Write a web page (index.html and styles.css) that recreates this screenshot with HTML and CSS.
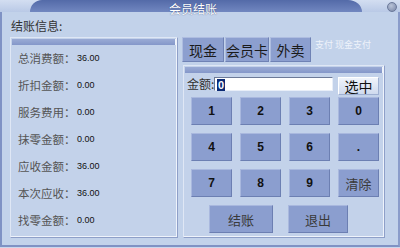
FILE: index.html
```html
<!DOCTYPE html>
<html>
	<head>
		<meta charset="utf-8">
		<title>会员结账</title>
		<link rel="stylesheet" href="styles.css">
	</head>
	<body>
		<div class="window">
			<div class="titlebar">
				<div class="band"><span class="title">会员结账</span></div>
				<span class="close"></span>
			</div>
			<div class="content">
				<div class="info">
					<div class="caption">结账信息:</div>
					<div class="panel info-panel">
						<div class="panel-head"></div>
						<ul class="rows">
							<li><span class="label">总消费额：</span><span class="value">36.00</span></li>
							<li><span class="label">折扣金额：</span><span class="value">0.00</span></li>
							<li><span class="label">服务费用：</span><span class="value">0.00</span></li>
							<li><span class="label">抹零金额：</span><span class="value">0.00</span></li>
							<li><span class="label">应收金额：</span><span class="value">36.00</span></li>
							<li><span class="label">本次应收：</span><span class="value">36.00</span></li>
							<li><span class="label">找零金额：</span><span class="value">0.00</span></li>
						</ul>
					</div>
				</div>
				<div class="pay">
					<div class="tabs">
						<button class="tab">现金</button>
						<button class="tab">会员卡</button>
						<button class="tab">外卖</button>
						<span class="pay-note">支付 现金支付</span>
					</div>
					<div class="panel pay-panel">
						<div class="panel-head"></div>
						<div class="amount-row">
							<span class="amount-label">金额:</span>
							<div class="amount-input"><span class="sel">0</span></div>
							<button class="pick">选中</button>
						</div>
						<div class="keypad">
							<button class="key">1</button>
							<button class="key">2</button>
							<button class="key">3</button>
							<button class="key">0</button>
							<button class="key">4</button>
							<button class="key">5</button>
							<button class="key">6</button>
							<button class="key">.</button>
							<button class="key">7</button>
							<button class="key">8</button>
							<button class="key">9</button>
							<button class="key cn">清除</button>
						</div>
						<div class="actions">
							<button class="key cn act-ok">结账</button>
							<button class="key cn act-exit">退出</button>
						</div>
					</div>
				</div>
			</div>
		</div>
	</body>
</html>
```

FILE: styles.css
```css
* {
	box-sizing: border-box;
}
body {
	margin: 0;
	width: 400px;
	height: 248px;
	overflow: hidden;
	background: #cad7ec;
	font-family: "Noto Sans CJK SC", "Liberation Sans", sans-serif;
	font-size: 12px;
	color: #333;
	white-space: nowrap;
}
.window {
	width: 400px;
	height: 247px;
	background: #c2d2ea;
	border-left: 2px solid #7f92c4;
	border-right: 2px solid #8a9cca;
	border-bottom: 2px solid #7f92c4;
}
.titlebar {
	height: 12px;
	display: flex;
	align-items: stretch;
	background: linear-gradient(#d3def1, #b9c9e6);
	margin: 0 -2px;
	position: relative;
}
.band {
	flex: 1;
	margin: 0 38px 0 30px;
	background: linear-gradient(#536aa8, #7187c0);
	border-top-left-radius: 12px 12px;
	border-top-right-radius: 14px 12px;
	text-align: center;
}
.title {
	color: #fff;
	font-size: 12px;
	line-height: 12px;
	position: relative;
	left: -3px;
	text-shadow: 0 0 1px #2b3f73;
}
.close {
	position: absolute;
	right: 3px;
	top: 2px;
	width: 10px;
	height: 10px;
	border-radius: 50%;
	background: radial-gradient(circle at 40% 35%, #b8c3d8, #7785a6);
	border: 1px solid #6a7899;
}
.content {
	display: flex;
	padding-left: 8px;
}
.info {
	width: 168px;
}
.caption {
	height: 25px;
	padding: 2px 0 0 1px;
	line-height: 23px;
	font-size: 12px;
	color: #333;
}
.panel {
	border: 1px solid #8e9fc8;
	border-top-color: #dfe7f5;
	border-left-color: #dfe7f5;
	background: #c3d2ea;
	box-shadow: inset -1px -1px 0 #eef3fb;
	padding: 1px;
}
.panel-head {
	height: 6px;
	background: linear-gradient(#9aabd5, #8497c9);
	border-right: 1px solid #eef3fb;
}
.info-panel {
	height: 201px;
}
.rows {
	list-style: none;
	margin: -1px 0 0 0;
	padding: 0;
}
.rows li {
	height: 27px;
	display: flex;
	align-items: center;
	padding-left: 6px;
}
.label {
	width: 59px;
	flex-shrink: 0;
	font-size: 11.5px;
	color: #555;
}
.value {
	font-family: "Liberation Sans", sans-serif;
	font-size: 9px;
	color: #111;
}
.pay {
	width: 203px;
	margin-left: 4px;
	padding-top: 25px;
}
.tabs {
	display: flex;
	height: 25px;
	gap: 1px;
}
.tab {
	height: 25px;
	padding: 0;
	font-family: "Noto Sans CJK SC", sans-serif;
	font-size: 14px;
	line-height: 22px;
	color: #1a1a1a;
	background: #8c9fcf;
	border: 1px solid #6f82b4;
	border-top-color: #aebde0;
	border-left-color: #aebde0;
	white-space: nowrap;
	flex-shrink: 0;
}
.tab:nth-child(1) {
	width: 42px;
}
.tab:nth-child(2) {
	width: 44px;
}
.tab:nth-child(3) {
	width: 41px;
}
.pay-note {
	margin-left: 3px;
	margin-top: 1px;
	font-size: 9px;
	line-height: 14px;
	color: #eef2fa;
}
.pay-panel {
	margin: 3px 0 0 1px;
	height: 173px;
}
.amount-row {
	display: flex;
	align-items: flex-start;
	padding: 4px 0 0 2px;
	height: 23px;
}
.amount-label {
	width: 27px;
	flex-shrink: 0;
	line-height: 14px;
	font-size: 12px;
	color: #333;
}
.amount-input {
	width: 119px;
	height: 14px;
	background: #fff;
	border: 1px solid #6c7a98;
	border-right-color: #e8eef8;
	border-bottom-color: #e8eef8;
	padding-left: 2px;
	line-height: 12px;
}
.sel {
	display: inline-block;
	background: #0b2a74;
	color: #fff;
	font-family: "Liberation Sans", sans-serif;
	font-weight: bold;
	font-size: 11px;
	line-height: 12px;
	padding: 0 1px;
}
.pick {
	margin-left: 5px;
	width: 41px;
	height: 18px;
	padding: 0;
	font-family: "Noto Sans CJK SC", sans-serif;
	font-size: 14px;
	line-height: 16px;
	color: #111;
	background: linear-gradient(#f0f4fb, #cfdaee);
	border: 1px solid #9fb0d2;
	border-top-color: #fff;
	border-left-color: #fff;
}
.keypad {
	display: grid;
	grid-template-columns: repeat(4, 41px);
	grid-auto-rows: 28px;
	gap: 8px;
	margin-top: 1px;
	padding-left: 6px;
}
.key {
	padding: 0;
	font-family: "Liberation Sans", sans-serif;
	font-weight: bold;
	font-size: 12px;
	color: #111;
	background: #8b9ecf;
	border: 1px solid #6c7fb2;
	border-top-color: #a9b8de;
	border-left-color: #a9b8de;
}
.key.cn {
	font-family: "Noto Sans CJK SC", sans-serif;
	font-weight: normal;
	font-size: 13px;
	color: #3a3a3a;
}
.actions {
	display: flex;
	gap: 15px;
	margin-top: 8px;
	padding-left: 24px;
}
.act-ok {
	width: 64px;
	height: 28px;
}
.act-exit {
	width: 60px;
	height: 28px;
}
```
